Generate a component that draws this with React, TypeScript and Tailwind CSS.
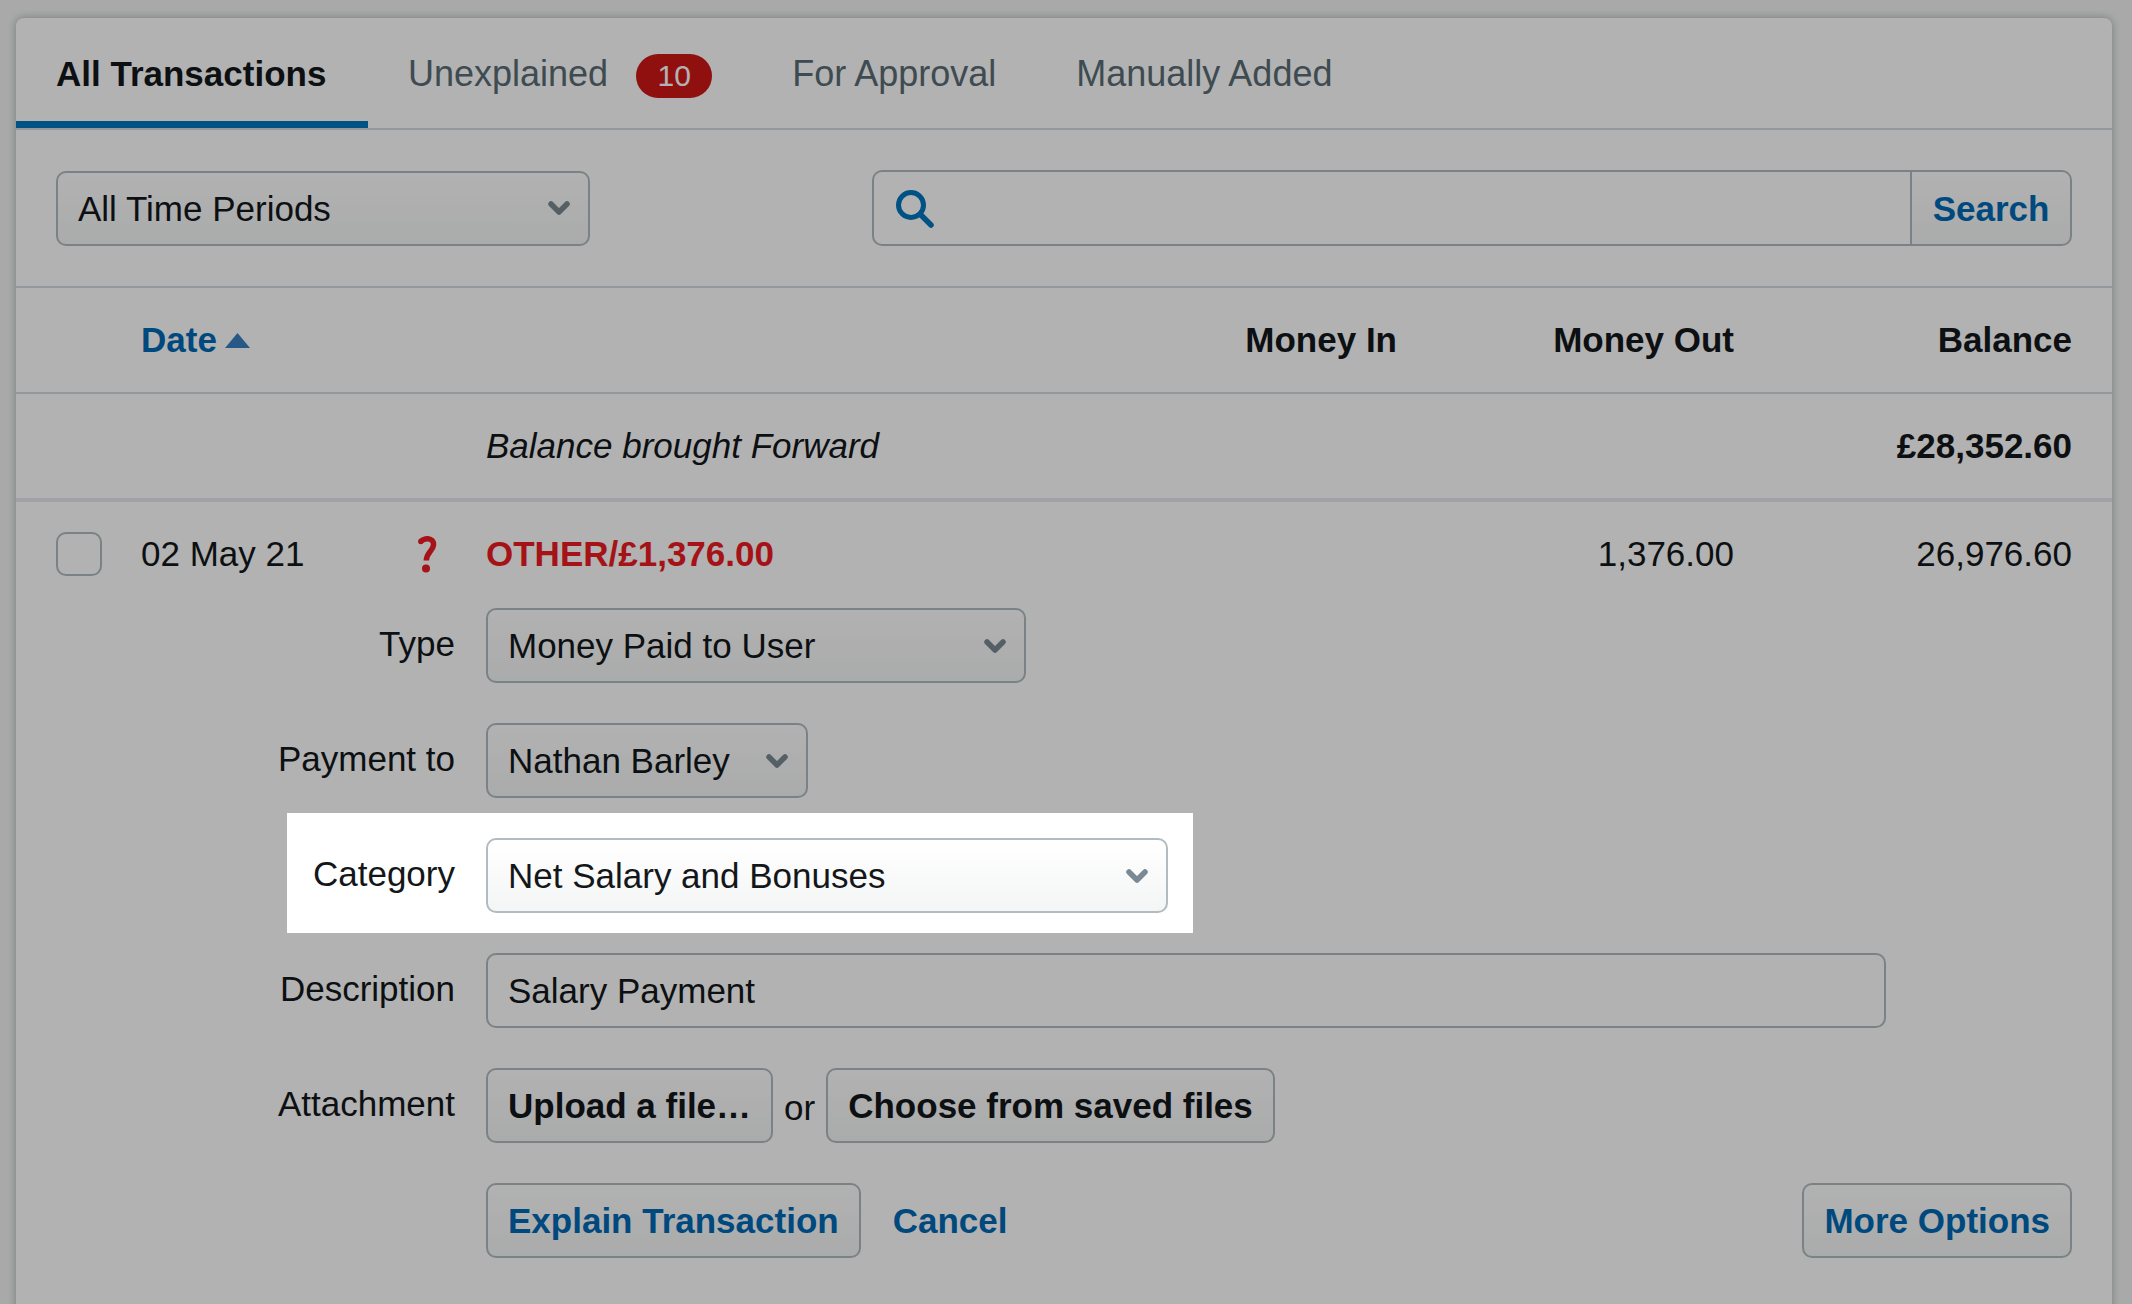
import { type ReactNode } from "react";

const buttonLook =
  "h-[75px] rounded-[10px] border-2 border-[#b1bbc1] bg-linear-to-b from-white to-[#f4f5f5] px-5 font-bold whitespace-nowrap";

function Chevron() {
  return (
    <svg
      viewBox="0 0 22 14"
      className="pointer-events-none absolute top-1/2 right-5 h-3.5 w-[22px] -translate-y-1/2"
      aria-hidden="true"
    >
      <path
        d="M3 3l8 8 8-8"
        fill="none"
        stroke="#7a8993"
        strokeWidth="5.5"
        strokeLinecap="round"
        strokeLinejoin="round"
      />
    </svg>
  );
}

function Select({ id, value, width, label }: { id: string; value: string; width: string; label?: string }) {
  return (
    <div className={`relative ${width}`}>
      <select
        id={id}
        aria-label={label}
        defaultValue={value}
        className="block h-[75px] w-full appearance-none rounded-[10px] border-2 border-[#b1bbc1] bg-linear-to-b from-white to-[#f4f5f5] pt-px pr-12 pl-5 outline-none"
      >
        <option>{value}</option>
      </select>
      <Chevron />
    </div>
  );
}

function FormRow({ label, htmlFor, children }: { label?: string; htmlFor?: string; children: ReactNode }) {
  return (
    <div className="flex items-center gap-[31px] pr-10">
      <div className="w-[439px] shrink-0 pb-1 text-right">
        {label && <label htmlFor={htmlFor}>{label}</label>}
      </div>
      {children}
    </div>
  );
}

function Tab({ active, children }: { active?: boolean; children: ReactNode }) {
  return (
    <button
      type="button"
      role="tab"
      aria-selected={!!active}
      className={
        active
          ? "flex h-[110px] min-w-[352px] items-center border-b-[7px] border-[#0076bd] px-10 pt-2 font-bold"
          : "flex h-[110px] items-center gap-7 border-b-[7px] border-transparent px-10 pt-2 text-[36px] text-[#596c75]"
      }
    >
      {children}
    </button>
  );
}

export default function App() {
  return (
    <div className="min-h-screen overflow-hidden bg-[#f2f3f3] px-4 pt-[18px] font-['Liberation_Sans',Arial,sans-serif] text-[35px] leading-[40px] text-[#14171a]">
      <main className="mr-1 -mb-28 min-h-[1400px] rounded-t-lg bg-white shadow-[0_0_8px_rgba(40,60,60,0.35)]">
        <div role="tablist" className="flex border-b-2 border-[#d2dae0]">
          <Tab active>All Transactions</Tab>
          <Tab>
            Unexplained
            <span className="mt-1 flex h-11 w-[76px] items-center justify-center rounded-full bg-[#cf1818] text-[30px] text-white">
              10
            </span>
          </Tab>
          <Tab>For Approval</Tab>
          <Tab>Manually Added</Tab>
        </div>

        <div className="flex items-center justify-between gap-10 border-b-2 border-[#d2dae0] px-10 py-10">
          <Select id="period" label="Time period" value="All Time Periods" width="w-[534px]" />
          <form role="search" className="flex h-[76px] max-w-[1200px] flex-1" onSubmit={(e) => e.preventDefault()}>
            <div className="relative flex-1">
              <svg viewBox="0 0 38 38" className="absolute top-5 left-6 size-[38px]" aria-hidden="true">
                <circle cx="15" cy="15" r="12.5" fill="none" stroke="#0076bd" strokeWidth="5" />
                <path d="M24.5 24.5l10.5 10.5" stroke="#0076bd" strokeWidth="5.5" strokeLinecap="round" />
              </svg>
              <input
                type="search"
                aria-label="Search transactions"
                className="h-full w-full rounded-l-[10px] border-2 border-r-0 border-[#b1bbc1] bg-white pr-5 pl-20 outline-none"
              />
            </div>
            <button
              type="submit"
              className="w-[162px] rounded-r-[10px] border-2 border-[#b1bbc1] bg-linear-to-b from-white to-[#f4f5f5] pt-0.5 font-bold text-[#0069b5]"
            >
              Search
            </button>
          </form>
        </div>

        <table className="w-full table-fixed border-collapse">
          <colgroup>
            <col className="w-[125px]" />
            <col className="w-[260px]" />
            <col className="w-[85px]" />
            <col />
            <col className="w-[300px]" />
            <col className="w-[337px]" />
            <col className="w-[378px]" />
          </colgroup>
          <thead>
            <tr className="h-[105px] border-b-2 border-[#d2dae0]">
              <td />
              <th className="text-left">
                <a href="#date" className="inline-flex items-center gap-2 text-[#0069b5]">
                  Date
                  <svg viewBox="0 0 25 15" className="h-[15px] w-[25px]" aria-hidden="true">
                    <path d="M12.500 0L25 15H0z" fill="#3a80c0" />
                  </svg>
                </a>
              </th>
              <td />
              <td />
              <th className="text-right">Money In</th>
              <th className="text-right">Money Out</th>
              <th className="pr-10 text-right">Balance</th>
            </tr>
          </thead>
          <tbody>
            <tr className="h-[107px] border-b-4 border-[#e6e9ec]">
              <td />
              <td />
              <td />
              <td className="italic">Balance brought Forward</td>
              <td />
              <td />
              <td className="pr-10 text-right font-bold">£28,352.60</td>
            </tr>
            <tr className="h-[106px]">
              <td className="pl-10">
                <input
                  type="checkbox"
                  aria-label="Select transaction of 02 May 21"
                  className="block h-11 w-[46px] appearance-none rounded-[10px] border-2 border-[#b1bbc1] bg-white"
                />
              </td>
              <td>02 May 21</td>
              <td className="pl-4">
                <svg viewBox="0 0 20 38" className="block h-[38px] w-5" role="img" aria-label="Unexplained">
                  <path
                    d="M3.500 6.500C6 4.300 8.500 3.500 11 3.700C14.700 4 16.800 6.500 16.500 10C16 16 9.500 17 9.300 25.500"
                    fill="none"
                    stroke="#ed1a21"
                    strokeWidth="5.5"
                  />
                  <circle cx="3.800" cy="6.500" r="2.700" fill="#ed1a21" />
                  <circle cx="9" cy="33.500" r="4" fill="#ed1a21" />
                </svg>
              </td>
              <td className="font-bold text-[#ed1a21]">OTHER/£1,376.00</td>
              <td />
              <td className="text-right">1,376.00</td>
              <td className="pr-10 text-right">26,976.60</td>
            </tr>
            <tr>
              <td colSpan={7}>
                <form className="flex flex-col gap-10 pt-0.5 pb-12" onSubmit={(e) => e.preventDefault()}>
                  <FormRow label="Type" htmlFor="type">
                    <Select id="type" value="Money Paid to User" width="w-[540px]" />
                  </FormRow>
                  <FormRow label="Payment to" htmlFor="payee">
                    <Select id="payee" value="Nathan Barley" width="w-[322px]" />
                  </FormRow>

                  {/* Spotlight: the spread shadow dims everything but this row */}
                  <div className="relative z-10 -mt-[25px] -mb-5 ml-[271px] flex w-fit items-center gap-[31px] bg-white pt-[25px] pr-[25px] pb-5 shadow-[0_0_0_3000px_rgba(0,0,0,0.3)]">
                    <label htmlFor="category" className="w-[168px] pb-1 text-right">
                      Category
                    </label>
                    <Select id="category" value="Net Salary and Bonuses" width="w-[682px]" />
                  </div>

                  <FormRow label="Description" htmlFor="description">
                    <input
                      id="description"
                      type="text"
                      defaultValue="Salary Payment"
                      className="h-[75px] w-full max-w-[1400px] rounded-[10px] border-2 border-[#b1bbc1] bg-white px-5 pt-px outline-none"
                    />
                  </FormRow>
                  <FormRow label="Attachment" htmlFor="upload">
                    <div className="flex items-center gap-[11px]">
                      <button id="upload" type="button" className={buttonLook}>
                        Upload a file…
                      </button>
                      <span className="pt-1">or</span>
                      <button type="button" className={buttonLook}>
                        Choose from saved files
                      </button>
                    </div>
                  </FormRow>
                  <FormRow>
                    <div className="flex flex-1 items-center text-[#0069b5]">
                      <button type="submit" className={buttonLook}>
                        Explain Transaction
                      </button>
                      <a href="#cancel" className="ml-8 font-bold">
                        Cancel
                      </a>
                      <button type="button" className={`ml-auto ${buttonLook}`}>
                        More Options
                      </button>
                    </div>
                  </FormRow>
                </form>
              </td>
            </tr>
          </tbody>
        </table>
      </main>
    </div>
  );
}
